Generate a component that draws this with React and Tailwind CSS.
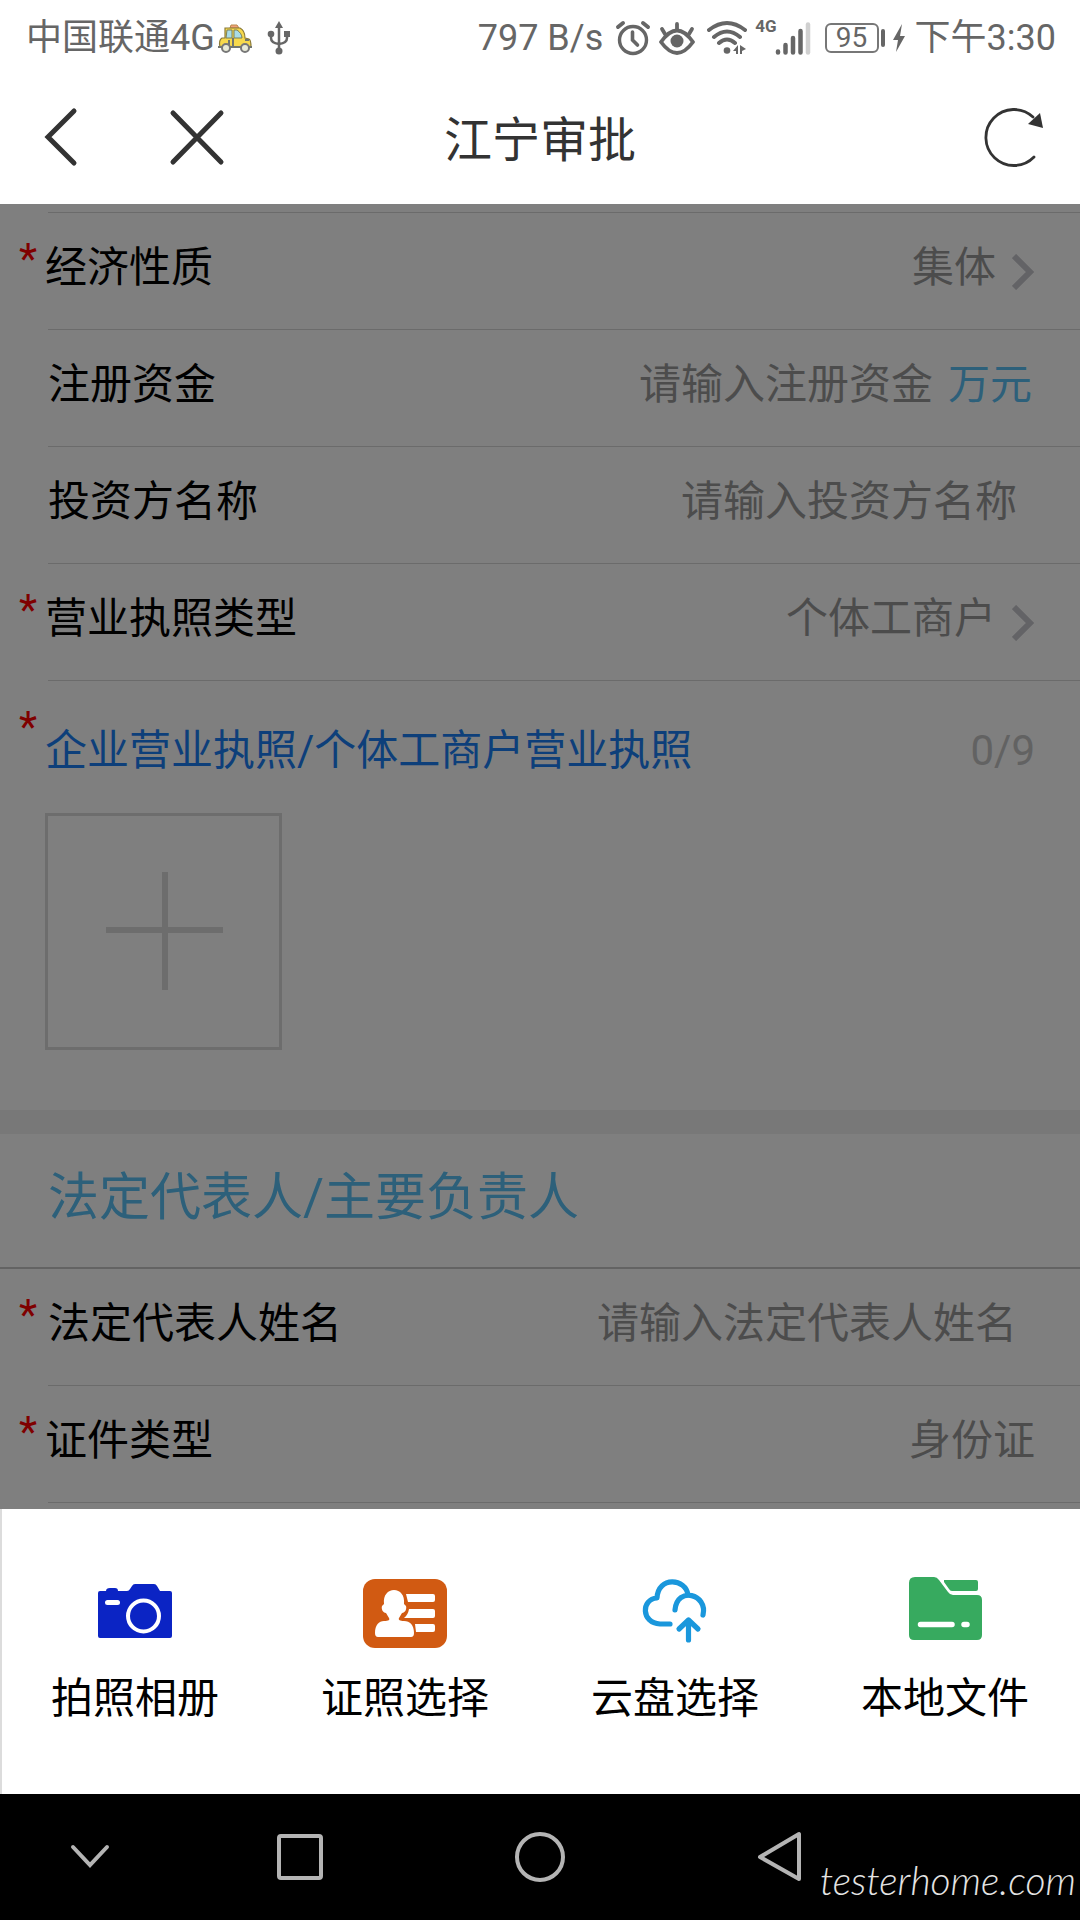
const StatusBar = () => {
  return (
    <div className="flex h-[72px] items-center justify-between pt-1 pl-[26px] pr-6 text-4xl leading-[48px] text-[#666666]">
      <div className="flex items-center">
        <span>中国联通4G</span>
        <svg className="ml-0.5 h-9 w-9" viewBox="0 0 36 36" aria-hidden="true">
          <path d="M14 5h6l2 3h-9z" fill="#f2a07a" stroke="#b98a4a" />
          <path d="M8 8h15c4 2 5 6 5 10l4 1c2 1 2 4 2 8H3c-1-4-1-7 2-9h3z" fill="#f7d94c" stroke="#8a7a3a" strokeWidth="1.2" />
          <path d="M10 10h5v8h-6zM17 10h3c3 2 5 5 5 8h-8z" fill="#a9dbe6" stroke="#7b7f59" />
          <path d="M1 27h34M16 18v9M12 20v5M28 20h4" stroke="#71766f" strokeWidth="2" fill="none" />
          <circle cx="9" cy="28" r="4" fill="#e8ead8" stroke="#777" strokeWidth="2" />
          <circle cx="28" cy="28" r="4" fill="#e8ead8" stroke="#777" strokeWidth="2" />
        </svg>
        <svg className="ml-3 h-9 w-7" viewBox="0 0 28 36" fill="none" stroke="currentColor" strokeWidth="2.5" aria-hidden="true">
          <path d="M14 7v23M6 14v4q0 5 8 6q8-1 8-6v-4" />
          <path d="M14 1l4 7h-8z" fill="currentColor" stroke="none" />
          <circle cx="6" cy="14" r="3.3" fill="currentColor" stroke="none" />
          <path d="M19 11h6v6h-6z" fill="currentColor" stroke="none" />
          <circle cx="14" cy="31" r="3.5" fill="currentColor" stroke="none" />
        </svg>
      </div>
      <div className="flex items-center">
        <span>797 B/s</span>
        <svg className="ml-3 h-9 w-9" viewBox="0 0 36 36" fill="none" stroke="currentColor" strokeWidth="3.4" aria-hidden="true">
          <circle cx="18" cy="20" r="13.5" />
          <path d="M17.500 12v8l5 5" strokeWidth="3.6" strokeLinecap="round" />
          <path d="M3 7l5-4M33 7l-5-4" strokeWidth="4" strokeLinecap="round" />
        </svg>
        <svg className="ml-2 h-9 w-9" viewBox="0 0 36 36" fill="none" stroke="currentColor" strokeWidth="3.800" strokeLinecap="round" aria-hidden="true">
          <path d="M2 22q16-23 32 0q-16 22-32 0z" strokeLinejoin="round" />
          <circle cx="18" cy="21" r="6.500" fill="currentColor" stroke="none" />
          <path d="M18 10V4M6 14L3 9M30 14l3-5" />
        </svg>
        <svg className="ml-3 h-9 w-10" viewBox="0 0 40 36" fill="none" stroke="currentColor" strokeWidth="4" strokeLinecap="round" aria-hidden="true">
          <path d="M2 10q18-14 36 0M7 17q13-11 26 0M12 23q8-7 16 0" />
          <circle cx="20" cy="30.500" r="3.300" fill="currentColor" stroke="none" />
          <path d="M26 31l5-6v9h-2v-3zM33 34v-9l6 4-4 2v3z" fill="currentColor" stroke="none" />
        </svg>
        <span className="ml-2 self-start pt-0.5 text-[17px] leading-5 font-bold">4G</span>
        <svg className="-ml-0.5 h-9 w-9" viewBox="0 0 36 36" fill="none" stroke="currentColor" strokeWidth="4.500" strokeLinecap="round" aria-hidden="true">
          <path d="M3 31.500v1M10.500 25v7.500M18 18v14.500M25.500 11v21.500" />
          <path d="M33 4.500v28" stroke="#d0d0d0" />
        </svg>
        <span className="ml-3.5 flex h-[30px] w-[54px] items-center justify-center rounded-md border-2 border-[#777777] text-[28px] leading-none">95</span>
        <span className="ml-0.5 h-[18px] w-1 rounded-xs bg-[#666666]"></span>
        <svg className="ml-1.5 h-7 w-4" viewBox="0 0 16 28" aria-hidden="true">
          <path d="M11 0L2 16h5L5 28l9-16H9z" fill="currentColor" />
        </svg>
        <span className="ml-2">下午3:30</span>
      </div>
    </div>
  );
};

const TitleBar = () => {
  return (
    <header className="grid h-[132px] grid-cols-[1fr_auto_1fr] items-center text-[#333333]">
      <div className="flex items-center pl-8">
        <button type="button" aria-label="返回" className="flex w-15 items-center justify-center">
          <svg className="h-16 w-10" viewBox="0 0 40 64" fill="none" stroke="currentColor" strokeWidth="5" strokeLinecap="round">
            <path d="M32 5L6 31L32 57" />
          </svg>
        </button>
        <button type="button" aria-label="关闭" className="ml-[75px] flex w-15 items-center justify-center">
          <svg className="h-16 w-15" viewBox="0 0 60 64" fill="none" stroke="currentColor" strokeWidth="5" strokeLinecap="round">
            <path d="M6 7L54 56M54 7L6 56" />
          </svg>
        </button>
      </div>
      <h1 className="pt-1.5 text-5xl">江宁审批</h1>
      <div className="flex justify-end pr-9">
        <button type="button" aria-label="刷新">
          <svg className="h-16 w-16" viewBox="0 0 64 64" fill="none" stroke="currentColor" strokeWidth="2.800" strokeLinecap="round">
            <path d="M53 11A28 28 0 1 0 54 51" />
            <path d="M63 22L60 7L48 18z" fill="currentColor" stroke="none" />
          </svg>
        </button>
      </div>
    </header>
  );
};

const Star = () => <span className="absolute left-[19px] top-[22px] leading-[48px] text-[#ff0000]">*</span>;

const Arrow = () => (
  <svg className="ml-4 h-9 w-[22px]" viewBox="0 0 22 36" fill="none" stroke="#c7c7cc" strokeWidth="6" aria-hidden="true">
    <path d="M2 2L18 18L2 34" />
  </svg>
);

const SelectRow = ({ id, label, value }) => {
  return (
    <div className="relative flex h-[117px] items-center pl-[45px] pr-[46px]">
      <Star />
      <label htmlFor={id} className="pb-2">{label}</label>
      <div className="flex flex-1 items-center justify-end">
        <select id={id} className="mb-2 appearance-none field-sizing-content text-[#999999]">
          <option>{value}</option>
        </select>
        <Arrow />
      </div>
    </div>
  );
};

const InputRow = ({ id, label, placeholder, unit, required }) => {
  return (
    <div className="relative flex h-[117px] items-center pl-12 pr-12 pb-2">
      {required && <Star />}
      <label htmlFor={id}>{label}</label>
      <input
        id={id}
        type="text"
        placeholder={placeholder}
        className="min-w-0 flex-1 pr-[15px] text-right placeholder:text-[#999999]"
      />
      {unit && <span className="text-[#5bc0f5]">{unit}</span>}
    </div>
  );
};

const Line = () => <hr className="-mt-px ml-12 border-t border-[#d6d6d6]" />;

const Form = () => {
  return (
    <form className="text-[42px] leading-[60px] text-black">
      <div className="h-[9px]"></div>
      <Line />
      <SelectRow id="economy" label="经济性质" value="集体" />
      <Line />
      <InputRow id="capital" label="注册资金" placeholder="请输入注册资金" unit="万元" />
      <Line />
      <InputRow id="investor" label="投资方名称" placeholder="请输入投资方名称" />
      <Line />
      <SelectRow id="licenseType" label="营业执照类型" value="个体工商户" />
      <Line />
      <div className="relative px-[45px] pt-10 pb-[60px]">
        <Star />
        <div className="flex items-center justify-between">
          <span className="text-[#1a7ff5]">企业营业执照/个体工商户营业执照</span>
          <span className="text-[#c4c4c4]">0/9</span>
        </div>
        <button
          type="button"
          aria-label="添加图片"
          className="mt-8 flex h-[237px] w-[237px] items-center justify-center border-3 border-[#dadada]"
        >
          <svg className="h-30 w-30" viewBox="0 0 120 120" stroke="#dadada" strokeWidth="6">
            <path d="M61 0V118M2 58H119" />
          </svg>
        </button>
      </div>
      <div className="h-6 bg-[#f1f1f1]"></div>
      <h2 className="h-[135px] border-b-2 border-[#c6c6c6] pt-[34px] pl-12 text-[51px] text-[#5bc0f5]">法定代表人/主要负责人</h2>
      <InputRow id="legalName" label="法定代表人姓名" placeholder="请输入法定代表人姓名" required />
      <Line />
      <div className="relative flex h-[117px] items-center pl-[45px] pr-[45px] pb-2">
        <Star />
        <label htmlFor="idType">证件类型</label>
        <input id="idType" type="text" readOnly defaultValue="身份证" className="min-w-0 flex-1 text-right text-[#999999]" />
      </div>
      <Line />
      <div className="h-[6px]"></div>
    </form>
  );
};

const actions = [
  {
    name: "拍照相册",
    icon: (
      <svg className="h-[84px] w-[84px]" viewBox="0 0 84 84">
        <path d="M5 24q0-2 2-2h6q0-3 4-3h5q3 0 3 3h9q2 0 3-2l2-3q1-2 3-2h19q2 0 3 2l3 5h10q2 0 2 2v43q0 2-2 2H7q-2 0-2-2z" fill="#0b24c4" />
        <rect x="12" y="31" width="15" height="5" rx="2.500" fill="#fff" />
        <circle cx="50.500" cy="47" r="15.500" fill="none" stroke="#fff" strokeWidth="4" />
      </svg>
    ),
  },
  {
    name: "证照选择",
    icon: (
      <svg className="h-[84px] w-[84px]" viewBox="0 0 84 84">
        <rect x="0" y="10" width="84" height="69" rx="12" fill="#d15a12" />
        <path d="M12 64c0-8 4-12 9-12c5 0 6-1 5-3l-3-5c-3 0-5-4-4-7l2-2c-1-9 4-14 10-14s11 5 10 14l2 2c1 3-1 7-4 7l-3 5c-1 2 1 3 5 3c6 0 10 4 10 12q0 4-3 4H15q-3 0-3-4z" fill="#fff" />
        <path d="M43 25h27q2 0 2 2v4q0 2-2 2H45zM46 40h24q2 0 2 2v5q0 2-2 2H41q4-3 5-9zM52 55h18q2 0 2 2v4q0 2-2 2H53z" fill="#fff" />
      </svg>
    ),
  },
  {
    name: "云盘选择",
    icon: (
      <svg className="h-[84px] w-[84px]" viewBox="0 0 84 84" fill="none" stroke="#1a97dc" strokeWidth="5.200" strokeLinecap="round" strokeLinejoin="round">
        <path d="M37 55H27C8 54 8 30 24 29C25 7 53 9 55 26" />
        <path d="M42 41C44 17 75 25 70 46" />
        <path d="M55.500 71V52M46 60l9.500-9L65 60" />
      </svg>
    ),
  },
  {
    name: "本地文件",
    icon: (
      <svg className="h-[84px] w-[84px]" viewBox="0 0 84 84" fill="#37aa5f">
        <path d="M6 14q0-6 6-6h19q3 0 5 3l9 12q2 3 5 3h24q5 0 5 5v35q0 5-5 5H11q-5 0-5-5z" />
        <path d="M41 11h32q2 0 2 2v7q0 2-2 2H49q-2 0-3-2l-5-7z" />
        <path d="M17.500 55.500H49M61 55.500h3" stroke="#fff" strokeWidth="5.500" strokeLinecap="round" />
      </svg>
    ),
  },
];

const ActionSheet = () => {
  return (
    <div className="grid grid-cols-4 bg-white pt-[60px] pb-[65px] shadow-[inset_2px_0_#dcdcdc]">
      {actions.map((item) => (
        <button key={item.name} type="button" className="flex flex-col items-center text-[42px] leading-[60px] text-black">
          {item.icon}
          <span className="mt-4">{item.name}</span>
        </button>
      ))}
    </div>
  );
};

const NavBar = () => {
  return (
    <nav className="relative grid h-[126px] grid-cols-[3fr_4fr_4fr_4fr_3fr] items-center justify-items-center bg-black text-[#b4b4b4]">
      <button type="button" aria-label="收起">
        <svg className="h-[54px] w-[54px]" viewBox="0 0 54 54" fill="none" stroke="currentColor" strokeWidth="4" strokeLinecap="round">
          <path d="M10 17L27 35L44 17" />
        </svg>
      </button>
      <button type="button" aria-label="最近任务">
        <svg className="h-[54px] w-[54px]" viewBox="0 0 54 54" fill="none" stroke="currentColor" strokeWidth="4">
          <rect x="6" y="6" width="42" height="42" rx="2" />
        </svg>
      </button>
      <button type="button" aria-label="主页">
        <svg className="h-[54px] w-[54px]" viewBox="0 0 54 54" fill="none" stroke="currentColor" strokeWidth="4">
          <circle cx="27" cy="27" r="23" />
        </svg>
      </button>
      <button type="button" aria-label="后退">
        <svg className="h-[54px] w-[54px]" viewBox="0 0 54 54" fill="none" stroke="currentColor" strokeWidth="4" strokeLinejoin="round">
          <path d="M7 27L46 4V49z" />
        </svg>
      </button>
      <span className="absolute right-1 bottom-4 font-['Lato',sans-serif] text-[39px] leading-12 font-light italic text-[#e4e4e4]">testerhome.com</span>
    </nav>
  );
};

const App = () => {
  return (
    <div className="flex min-h-screen w-full flex-col bg-white font-['Roboto','Noto_Sans_CJK_SC',sans-serif]">
      <StatusBar />
      <TitleBar />
      <main className="relative flex-1 bg-white">
        <Form />
        <div className="absolute inset-0 bg-black/50"></div>
      </main>
      <ActionSheet />
      <NavBar />
    </div>
  );
};

export default App;
